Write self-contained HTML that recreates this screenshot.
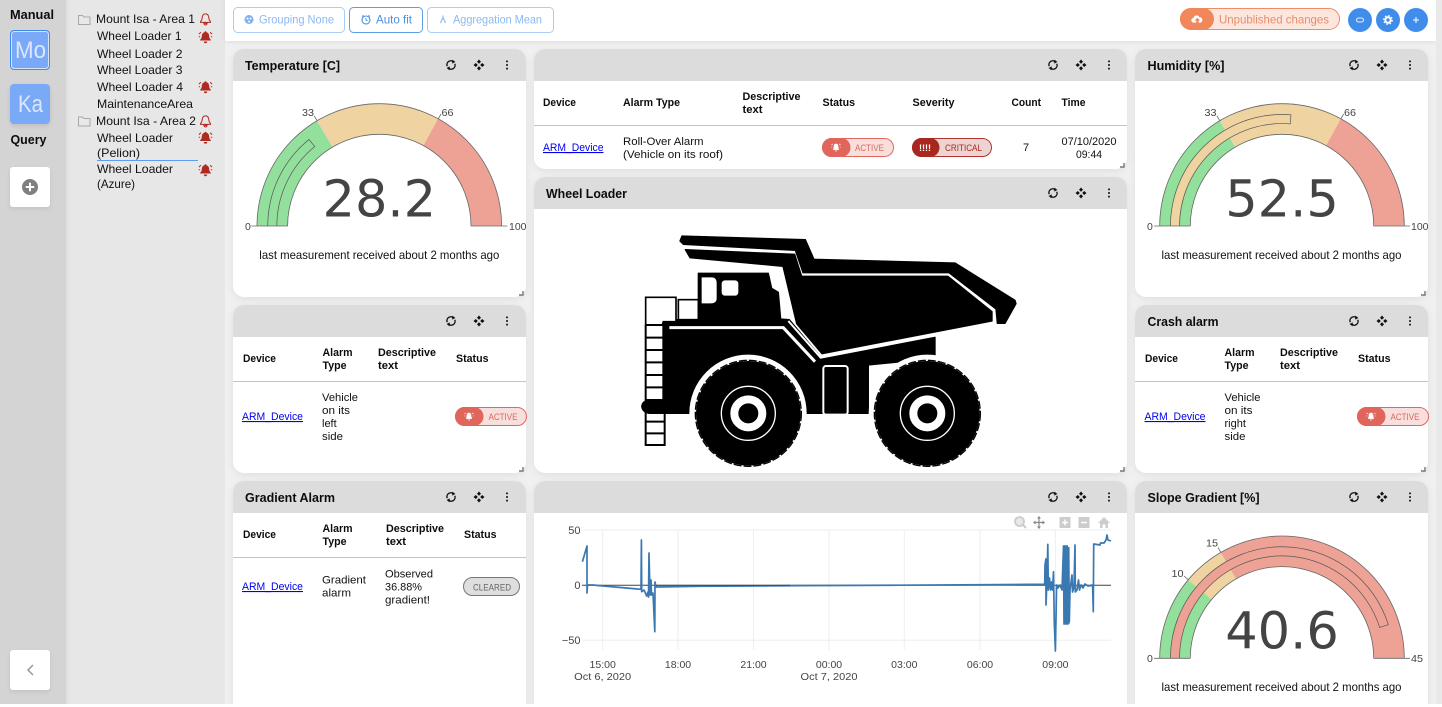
<!DOCTYPE html>
<html><head><meta charset="utf-8"><style>
html,body{margin:0;padding:0;width:1442px;height:707px;overflow:hidden;background:#fff}
#w{position:absolute;left:0;top:0;width:1442px;height:704px;overflow:hidden;background:#f0f0f0}
.d{position:absolute}
.card{position:absolute;background:#fff;border-radius:11px;overflow:hidden;box-shadow:0 2px 8px rgba(0,0,0,.07)}
.card i{display:block;height:32px;background:#dcdcdc}
svg{position:absolute;left:0;top:0}
text{font-family:"Liberation Sans",sans-serif;fill:#111;font-size:11px}
.b{font-weight:bold;fill:#0c0c0c}
.t{font-weight:bold;font-size:13px;fill:#0c0c0c}
.s{font-size:12px;fill:#111}
.l{fill:#00e;text-decoration:underline;font-size:11px}
.g{font-size:10.5px;fill:#444}
.v{font-family:"DejaVu Sans",sans-serif;font-size:51px;fill:#444}
.p{font-size:9px}
</style></head><body><div id="w">
<div class="d" style="left:0;top:0;width:66px;height:704px;background:#d4d4d4"></div>
<div class="d" style="left:66px;top:0;width:159px;height:704px;background:#e7e7e7;box-shadow:inset 4px 0 4px -3px rgba(0,0,0,.05)"></div>
<div class="d" style="left:225px;top:0;width:1211px;height:41px;background:#fff;box-shadow:0 1px 5px rgba(0,0,0,.08)"></div>
<div class="d" style="left:1436px;top:0;width:6px;height:704px;background:#e9e9e9"></div>
<div class="d" style="left:10px;top:30px;width:38px;height:38px;background:#7aa9f8;border:1px solid #3d8bea;border-radius:4px"></div>
<div class="d" style="left:10px;top:84px;width:40px;height:40px;background:#7aa9f8;border-radius:4px;box-shadow:0 2px 5px rgba(0,0,0,.1)"></div>
<div class="d" style="left:10px;top:167px;width:40px;height:40px;background:#fff;border-radius:3px;box-shadow:0 2px 5px rgba(0,0,0,.08)"></div>
<div class="d" style="left:10px;top:650px;width:40px;height:40px;background:#fff;border-radius:3px;box-shadow:0 2px 5px rgba(0,0,0,.08)"></div>

<div class="card" style="left:233px;top:49px;width:293px;height:248px"><i></i></div>
<div class="card" style="left:233px;top:305px;width:293px;height:168px"><i></i></div>
<div class="card" style="left:233px;top:481px;width:293px;height:240px"><i></i></div>
<div class="card" style="left:534px;top:49px;width:593px;height:120px"><i></i></div>
<div class="card" style="left:534px;top:177px;width:593px;height:296px"><i></i></div>
<div class="card" style="left:534px;top:481px;width:593px;height:240px"><i></i></div>
<div class="card" style="left:1135px;top:49px;width:293px;height:248px"><i></i></div>
<div class="card" style="left:1135px;top:305px;width:293px;height:168px"><i></i></div>
<div class="card" style="left:1135px;top:481px;width:293px;height:240px"><i></i></div>

<svg width="1442" height="704" viewBox="0 0 1442 704" xmlns="http://www.w3.org/2000/svg">
<defs>
<g id="ic">
<path d="M-3.8 1.2A3.9 3.9 0 0 1 2.6 -3M3.8 -1.2A3.9 3.9 0 0 1 -2.6 3" fill="none" stroke="#111" stroke-width="1.4"/>
<path d="M1.4 -5.4L4.4 -3L1.2 -1.4ZM-1.4 5.4L-4.4 3L-1.2 1.4Z" fill="#111"/>
<g fill="#111" transform="translate(28,0)"><path d="M0 -5.5L2 -3.2L0 -1.2L-2 -3.2ZM0 5.5L2 3.2L0 1.2L-2 3.2ZM-5.5 0L-3.2 -2L-1.2 0L-3.2 2ZM5.5 0L3.2 -2L1.2 0L3.2 2Z"/></g>
<g fill="#111" transform="translate(56,0)"><circle cy="-3.6" r="1"/><circle r="1"/><circle cy="3.6" r="1"/></g>
</g>
<path id="rs" d="M-4 0H0V-4" fill="none" stroke="#777" stroke-width="1.4"/>
<g id="bell"><path d="M0 -6.2a1 1 0 0 1 1 1c2.2.6 2.6 2.4 2.7 4.2.1 1.5.7 2.3 1.6 3.1v.9H-5.3v-.9c.9-.8 1.5-1.6 1.6-3.1.1-1.8.5-3.6 2.7-4.2a1 1 0 0 1 1-1zM-1.7 4h3.4a1.7 1.7 0 0 1-3.4 0z" fill="#b02a20"/><path d="M-4.6 -5.2L-6.6 -3.4M4.6 -5.2L6.6 -3.4M-6.7 -.8H-5.4M6.7 -.8H5.4" stroke="#b02a20" stroke-width="1" fill="none"/></g>
<g id="bo"><path d="M0 -5.6c2.8 0 3.3 2.2 3.4 4.4.1 1.6.7 2.4 1.6 3.2v.9H-5v-.9c.9-.8 1.5-1.6 1.6-3.2.1-2.2.6-4.4 3.4-4.4zM-1.6 3.9h3.2a1.6 1.6 0 0 1-3.2 0z" fill="none" stroke="#b02a20" stroke-width="1"/></g>
<path id="fo" d="M.5 1.5H4.5L6 3H12V10.5H.5Z" fill="#e8e8e8" stroke="#a8a8a8" stroke-width="1"/>
<g id="wb"><path d="M0 -3.8c1.6 0 2.2 1 2.3 2.6l.2 2L3.2 2.4H-3.2L-2.5.8l.2-2C-2.2 -2.8 -1.6 -3.8 0 -3.8zM-1 3h2a1 1 0 0 1-2 0z" fill="#fff"/><path d="M-3.3 -3.6L-4.4 -2.6M3.3 -3.6L4.4 -2.6M-4.7 -.5H-3.8M4.7 -.5H3.8" stroke="#fff" stroke-width=".8"/></g>
<g id="pa"><rect x=".5" y=".5" width="71" height="18" rx="9" fill="#f9dfdc" stroke="#e2685d"/><path d="M9.5 0H19a9.5 9.5 0 0 1 0 19H9.5a9.5 9.5 0 0 1 0-19z" fill="#e0655a"/><use href="#wb" x="14" y="9.5"/></g>
</defs>

<!-- rail -->
<text x="10" y="19" class="b" style="font-size:12.5px" textLength="44" lengthAdjust="spacingAndGlyphs">Manual</text>
<rect x="11.5" y="31.5" width="37" height="37" rx="3" fill="none" stroke="#d7e5fb" stroke-width="1"/>
<text x="15" y="58" style="font-size:24px;fill:#dce7fe" textLength="31" lengthAdjust="spacingAndGlyphs">Mo</text>
<text x="18" y="112" style="font-size:24px;fill:#dce7fe" textLength="25" lengthAdjust="spacingAndGlyphs">Ka</text>
<text x="10.5" y="144" class="b" style="font-size:12.5px" textLength="36" lengthAdjust="spacingAndGlyphs">Query</text>
<circle cx="30" cy="187" r="8" fill="#808080"/><path d="M25.8 187H34.2M30 182.8V191.2" stroke="#fff" stroke-width="2"/>
<path d="M33 665L28 670L33 675" fill="none" stroke="#999" stroke-width="1.5"/>

<!-- tree -->
<use href="#fo" x="78" y="14"/><use href="#fo" x="78" y="115.5"/>
<g>
<text x="96" y="23" class="s" textLength="99" lengthAdjust="spacingAndGlyphs">Mount Isa - Area 1</text>
<text x="97" y="40" class="s" textLength="84.5" lengthAdjust="spacingAndGlyphs">Wheel Loader 1</text>
<text x="97" y="58" class="s" textLength="85.5" lengthAdjust="spacingAndGlyphs">Wheel Loader 2</text>
<text x="97" y="74" class="s" textLength="85.5" lengthAdjust="spacingAndGlyphs">Wheel Loader 3</text>
<text x="97" y="91" class="s" textLength="86" lengthAdjust="spacingAndGlyphs">Wheel Loader 4</text>
<text x="97" y="108" class="s" textLength="96" lengthAdjust="spacingAndGlyphs">MaintenanceArea</text>
<text x="96" y="125" class="s" textLength="100" lengthAdjust="spacingAndGlyphs">Mount Isa - Area 2</text>
<text x="97" y="142" class="s" textLength="76" lengthAdjust="spacingAndGlyphs">Wheel Loader</text>
<text x="97" y="157" class="s" textLength="43" lengthAdjust="spacingAndGlyphs">(Pelion)</text>
<text x="97" y="173" class="s" textLength="76" lengthAdjust="spacingAndGlyphs">Wheel Loader</text>
<text x="97" y="188" class="s" textLength="38" lengthAdjust="spacingAndGlyphs">(Azure)</text>
</g>
<rect x="97" y="160" width="101" height="1" fill="#5b9df0"/>
<use href="#bo" x="205.5" y="19.5"/><use href="#bo" x="205.5" y="121.5"/>
<use href="#bell" x="205.5" y="37.5"/><use href="#bell" x="205.5" y="87.5"/><use href="#bell" x="205.5" y="138"/><use href="#bell" x="205.5" y="170.5"/>

<!-- toolbar -->
<rect x="233.5" y="7.5" width="111" height="25" rx="4" fill="#fff" stroke="#a9cdf7"/>
<rect x="349.5" y="7.5" width="73" height="25" rx="4" fill="#fff" stroke="#5a9ee8"/>
<rect x="427.5" y="7.5" width="126" height="25" rx="4" fill="#fff" stroke="#a9cdf7"/>
<circle cx="249" cy="19.5" r="4.5" fill="#7fb0f0"/><circle cx="247.5" cy="18.5" r="1" fill="#fff"/><circle cx="250.5" cy="18.5" r="1" fill="#fff"/><circle cx="249" cy="21.5" r="1" fill="#fff"/>
<circle cx="366" cy="20" r="4" fill="none" stroke="#4a90e2" stroke-width="1.1"/><path d="M366 18V20L367.5 21M362 16.5L363.5 15.3M370 16.5L368.5 15.3" fill="none" stroke="#4a90e2" stroke-width="1"/>
<path d="M443 15.5v2M443 17.5L440.5 23M443 17.5L445.5 23" fill="none" stroke="#8ab8f2" stroke-width="1.1"/>
<text x="259" y="23.5" textLength="75" lengthAdjust="spacingAndGlyphs" style="font-size:12px;fill:#8ab9f4">Grouping None</text>
<text x="376" y="23.5" textLength="36" lengthAdjust="spacingAndGlyphs" style="font-size:12px;fill:#4a90e2">Auto fit</text>
<text x="453" y="23.5" textLength="89" lengthAdjust="spacingAndGlyphs" style="font-size:12px;fill:#8ab9f4">Aggregation Mean</text>
<rect x="1180.5" y="8.5" width="159" height="21" rx="10.5" fill="#fde6de" stroke="#f28c62"/>
<path d="M1191 8H1203a11 11 0 0 1 0 22H1191a11 11 0 0 1 0-22z" fill="#f2875b"/>
<g transform="translate(1197,19.5) scale(.78) translate(-1196.5,-18.5)"><path d="M1192.5 22.5a3 3 0 0 1-.5-6 4 4 0 0 1 7.6-.8 3.4 3.4 0 0 1 .9 6.8h-2v-2.5h2l-3.5-3.8-3.5 3.8h2v2.5z" fill="#fff"/></g>
<text x="1219" y="23.5" textLength="110" lengthAdjust="spacingAndGlyphs" style="font-size:12px;fill:#e78d6c">Unpublished changes</text>
<circle cx="1360" cy="20" r="12" fill="#3f8ceb"/><circle cx="1388" cy="20" r="12" fill="#3f8ceb"/><circle cx="1416" cy="20" r="12" fill="#3f8ceb"/>
<rect x="1356.5" y="18" width="7" height="4" rx="2" fill="none" stroke="#fff" stroke-width="1.1" opacity=".85"/>
<circle cx="1388" cy="20" r="2.7" fill="none" stroke="#fff" stroke-width="2"/><circle cx="1388" cy="20" r="4.3" fill="none" stroke="#fff" stroke-width="1.2" stroke-dasharray="1.7 1.68"/>
<path d="M1413 20H1419M1416 17V23" stroke="#dfeafc" stroke-width="1.3"/>

<!-- card titles and icons -->
<text x="245" y="70" class="t" textLength="95" lengthAdjust="spacingAndGlyphs">Temperature [C]</text>
<text x="546" y="198" class="t" textLength="81" lengthAdjust="spacingAndGlyphs">Wheel Loader</text>
<text x="1147.5" y="70" class="t" textLength="77" lengthAdjust="spacingAndGlyphs">Humidity [%]</text>
<text x="1147.5" y="326" class="t" textLength="71" lengthAdjust="spacingAndGlyphs">Crash alarm</text>
<text x="245" y="502" class="t" textLength="90" lengthAdjust="spacingAndGlyphs">Gradient Alarm</text>
<text x="1147.5" y="502" class="t" textLength="112" lengthAdjust="spacingAndGlyphs">Slope Gradient [%]</text>
<use href="#ic" x="451" y="65"/><use href="#ic" x="451" y="321"/><use href="#ic" x="451" y="497"/>
<use href="#ic" x="1053" y="65"/><use href="#ic" x="1053" y="193"/><use href="#ic" x="1053" y="497"/>
<use href="#ic" x="1354" y="65"/><use href="#ic" x="1354" y="321"/><use href="#ic" x="1354" y="497"/>
<use href="#rs" x="523" y="295"/><use href="#rs" x="523" y="471"/><use href="#rs" x="1124" y="167"/><use href="#rs" x="1124" y="471"/><use href="#rs" x="1425" y="295"/><use href="#rs" x="1425" y="471"/>

<!-- Temperature gauge -->
<g transform="translate(379.3,226)" fill="none">
<g stroke-width="30.6">
<path d="M-107 0A107 107 0 0 1 107 0" pathLength="100" stroke="#93e09c" stroke-dasharray="33 100"/>
<path d="M-107 0A107 107 0 0 1 107 0" pathLength="100" stroke="#efd3a0" stroke-dasharray="33 100" stroke-dashoffset="-33"/>
<path d="M-107 0A107 107 0 0 1 107 0" pathLength="100" stroke="#eea295" stroke-dasharray="34 100" stroke-dashoffset="-66"/>
</g>
<path d="M-107 0A107 107 0 0 1 107 0" pathLength="100" stroke="#555" stroke-width="9.8" stroke-dasharray="28.4 100"/>
<path d="M-107 0A107 107 0 0 1 107 0" pathLength="100" stroke="#93e09c" stroke-width="8.4" stroke-dasharray="28.2 100"/>
<path d="M-122.3 0A122.3 122.3 0 0 1 122.3 0M-91.7 0A91.7 91.7 0 0 1 91.7 0M-128 0H-91.7M91.7 0H128M-62.2 -105.3L-65.2 -110.2M58.9 -107.1L61.7 -112.1" stroke="#666" stroke-width=".8"/>
</g>
<text x="245" y="230" class="g">0</text><text x="509" y="230" class="g" textLength="17.5" lengthAdjust="spacingAndGlyphs">100</text>
<text x="302" y="116" class="g" textLength="12" lengthAdjust="spacingAndGlyphs">33</text><text x="441.5" y="116" class="g" textLength="12" lengthAdjust="spacingAndGlyphs">66</text>
<text x="379.3" y="216.5" class="v" text-anchor="middle">28.2</text>
<text x="259.3" y="259" class="s" textLength="240" lengthAdjust="spacingAndGlyphs">last measurement received about 2 months ago</text>

<!-- Humidity gauge -->
<g transform="translate(1282,226)" fill="none">
<g stroke-width="30.6">
<path d="M-107 0A107 107 0 0 1 107 0" pathLength="100" stroke="#93e09c" stroke-dasharray="33 100"/>
<path d="M-107 0A107 107 0 0 1 107 0" pathLength="100" stroke="#efd3a0" stroke-dasharray="33 100" stroke-dashoffset="-33"/>
<path d="M-107 0A107 107 0 0 1 107 0" pathLength="100" stroke="#eea295" stroke-dasharray="34 100" stroke-dashoffset="-66"/>
</g>
<path d="M-107 0A107 107 0 0 1 107 0" pathLength="100" stroke="#555" stroke-width="9.8" stroke-dasharray="52.7 100"/>
<path d="M-107 0A107 107 0 0 1 107 0" pathLength="100" stroke="#efd3a0" stroke-width="8.4" stroke-dasharray="52.5 100"/>
<path d="M-122.3 0A122.3 122.3 0 0 1 122.3 0M-91.7 0A91.7 91.7 0 0 1 91.7 0M-128 0H-91.7M91.7 0H128M-62.2 -105.3L-65.2 -110.2M58.9 -107.1L61.7 -112.1" stroke="#666" stroke-width=".8"/>
</g>
<text x="1147" y="230" class="g">0</text><text x="1411" y="230" class="g" textLength="17.5" lengthAdjust="spacingAndGlyphs">100</text>
<text x="1204.5" y="116" class="g" textLength="12" lengthAdjust="spacingAndGlyphs">33</text><text x="1344" y="116" class="g" textLength="12" lengthAdjust="spacingAndGlyphs">66</text>
<text x="1282" y="216.5" class="v" text-anchor="middle">52.5</text>
<text x="1161.5" y="259" class="s" textLength="240" lengthAdjust="spacingAndGlyphs">last measurement received about 2 months ago</text>

<!-- Slope gauge -->
<g transform="translate(1282,658.3)" fill="none">
<g stroke-width="30.6">
<path d="M-107 0A107 107 0 0 1 107 0" pathLength="100" stroke="#93e09c" stroke-dasharray="22.2 100"/>
<path d="M-107 0A107 107 0 0 1 107 0" pathLength="100" stroke="#efd3a0" stroke-dasharray="11.1 100" stroke-dashoffset="-22.2"/>
<path d="M-107 0A107 107 0 0 1 107 0" pathLength="100" stroke="#eea295" stroke-dasharray="66.7 100" stroke-dashoffset="-33.3"/>
</g>
<path d="M-107 0A107 107 0 0 1 107 0" pathLength="100" stroke="#555" stroke-width="9.8" stroke-dasharray="90.4 100"/>
<path d="M-107 0A107 107 0 0 1 107 0" pathLength="100" stroke="#eea295" stroke-width="8.4" stroke-dasharray="90.2 100"/>
<path d="M-122.3 0A122.3 122.3 0 0 1 122.3 0M-91.7 0A91.7 91.7 0 0 1 91.7 0M-128 0H-91.7M91.7 0H128M-93.7 -78.6L-98 -82.3M-61.2 -106L-64 -110.9" stroke="#666" stroke-width=".8"/>
</g>
<text x="1147" y="662" class="g">0</text><text x="1411" y="662" class="g" textLength="12" lengthAdjust="spacingAndGlyphs">45</text>
<text x="1206" y="546.5" class="g" textLength="12" lengthAdjust="spacingAndGlyphs">15</text><text x="1171.5" y="577" class="g" textLength="12" lengthAdjust="spacingAndGlyphs">10</text>
<text x="1282" y="648.3" class="v" text-anchor="middle">40.6</text>
<text x="1161.5" y="691" class="s" textLength="240" lengthAdjust="spacingAndGlyphs">last measurement received about 2 months ago</text>

<!-- Top alarm table -->
<text x="543" y="106" class="b" textLength="33" lengthAdjust="spacingAndGlyphs">Device</text>
<text x="623" y="106" class="b" textLength="57" lengthAdjust="spacingAndGlyphs">Alarm Type</text>
<text x="742.5" y="100" class="b" textLength="58" lengthAdjust="spacingAndGlyphs">Descriptive</text>
<text x="742.5" y="113" class="b" textLength="20" lengthAdjust="spacingAndGlyphs">text</text>
<text x="822.5" y="106" class="b" textLength="32.5" lengthAdjust="spacingAndGlyphs">Status</text>
<text x="912.5" y="106" class="b" textLength="42" lengthAdjust="spacingAndGlyphs">Severity</text>
<text x="1011.5" y="106" class="b" textLength="29.5" lengthAdjust="spacingAndGlyphs">Count</text>
<text x="1061.5" y="106" class="b" textLength="24" lengthAdjust="spacingAndGlyphs">Time</text>
<rect x="534" y="125" width="593" height="1" fill="#c4c4c4"/>
<text x="543" y="151" class="l" textLength="60.5" lengthAdjust="spacingAndGlyphs">ARM_Device</text>
<text x="623" y="145" textLength="80.5" lengthAdjust="spacingAndGlyphs">Roll-Over Alarm</text>
<text x="623" y="158" textLength="100" lengthAdjust="spacingAndGlyphs">(Vehicle on its roof)</text>
<use href="#pa" x="822" y="138"/>
<text x="855" y="151" class="p" textLength="29" lengthAdjust="spacingAndGlyphs" style="fill:#d9685e">ACTIVE</text>
<rect x="912.5" y="138.5" width="79" height="18" rx="9" fill="#edd3d1" stroke="#b4362e"/>
<path d="M921.5 138H930a9.5 9.5 0 0 1 0 19H921.5a9.5 9.5 0 0 1 0-19z" fill="#a8281f"/>
<text x="925" y="151" text-anchor="middle" class="p" style="fill:#fff;font-weight:bold">!!!!</text>
<text x="945" y="151" class="p" textLength="37" lengthAdjust="spacingAndGlyphs" style="fill:#a8281f">CRITICAL</text>
<text x="1026" y="151" text-anchor="middle">7</text>
<text x="1061.5" y="145" textLength="55" lengthAdjust="spacingAndGlyphs">07/10/2020</text>
<text x="1076" y="158" textLength="26" lengthAdjust="spacingAndGlyphs">09:44</text>

<!-- Left alarm table -->
<text x="243" y="362" class="b" textLength="33" lengthAdjust="spacingAndGlyphs">Device</text>
<text x="322.5" y="356" class="b" textLength="30" lengthAdjust="spacingAndGlyphs">Alarm</text>
<text x="322.5" y="369" class="b" textLength="24" lengthAdjust="spacingAndGlyphs">Type</text>
<text x="378" y="356" class="b" textLength="58" lengthAdjust="spacingAndGlyphs">Descriptive</text>
<text x="378" y="369" class="b" textLength="20" lengthAdjust="spacingAndGlyphs">text</text>
<text x="456" y="362" class="b" textLength="32.5" lengthAdjust="spacingAndGlyphs">Status</text>
<rect x="233" y="381" width="293" height="1" fill="#c4c4c4"/>
<text x="242" y="420" class="l" textLength="61" lengthAdjust="spacingAndGlyphs">ARM_Device</text>
<text x="322" y="401" textLength="36" lengthAdjust="spacingAndGlyphs">Vehicle</text>
<text x="322" y="414" textLength="28" lengthAdjust="spacingAndGlyphs">on its</text>
<text x="322" y="427">left</text>
<text x="322" y="440" textLength="21" lengthAdjust="spacingAndGlyphs">side</text>
<use href="#pa" x="455" y="407"/>
<text x="488.5" y="420" class="p" textLength="29" lengthAdjust="spacingAndGlyphs" style="fill:#d9685e">ACTIVE</text>

<!-- Crash table -->
<text x="1145" y="362" class="b" textLength="33" lengthAdjust="spacingAndGlyphs">Device</text>
<text x="1224.5" y="356" class="b" textLength="30" lengthAdjust="spacingAndGlyphs">Alarm</text>
<text x="1224.5" y="369" class="b" textLength="24" lengthAdjust="spacingAndGlyphs">Type</text>
<text x="1280" y="356" class="b" textLength="58" lengthAdjust="spacingAndGlyphs">Descriptive</text>
<text x="1280" y="369" class="b" textLength="20" lengthAdjust="spacingAndGlyphs">text</text>
<text x="1358" y="362" class="b" textLength="32.5" lengthAdjust="spacingAndGlyphs">Status</text>
<rect x="1135" y="381" width="293" height="1" fill="#c4c4c4"/>
<text x="1144.5" y="420" class="l" textLength="61" lengthAdjust="spacingAndGlyphs">ARM_Device</text>
<text x="1224.5" y="401" textLength="36" lengthAdjust="spacingAndGlyphs">Vehicle</text>
<text x="1224.5" y="414" textLength="28" lengthAdjust="spacingAndGlyphs">on its</text>
<text x="1224.5" y="427">right</text>
<text x="1224.5" y="440" textLength="21" lengthAdjust="spacingAndGlyphs">side</text>
<use href="#pa" x="1357" y="407"/>
<text x="1390.5" y="420" class="p" textLength="29" lengthAdjust="spacingAndGlyphs" style="fill:#d9685e">ACTIVE</text>

<!-- Gradient table -->
<text x="243" y="538" class="b" textLength="33" lengthAdjust="spacingAndGlyphs">Device</text>
<text x="322.5" y="532" class="b" textLength="30" lengthAdjust="spacingAndGlyphs">Alarm</text>
<text x="322.5" y="545" class="b" textLength="24" lengthAdjust="spacingAndGlyphs">Type</text>
<text x="386" y="532" class="b" textLength="58" lengthAdjust="spacingAndGlyphs">Descriptive</text>
<text x="386" y="545" class="b" textLength="20" lengthAdjust="spacingAndGlyphs">text</text>
<text x="464" y="538" class="b" textLength="32.5" lengthAdjust="spacingAndGlyphs">Status</text>
<rect x="233" y="557" width="293" height="1" fill="#c4c4c4"/>
<text x="242" y="590" class="l" textLength="61" lengthAdjust="spacingAndGlyphs">ARM_Device</text>
<text x="322" y="583.5" textLength="44" lengthAdjust="spacingAndGlyphs">Gradient</text>
<text x="322" y="596.5" textLength="29" lengthAdjust="spacingAndGlyphs">alarm</text>
<text x="385" y="577.5" textLength="48" lengthAdjust="spacingAndGlyphs">Observed</text>
<text x="385" y="590.5" textLength="37" lengthAdjust="spacingAndGlyphs">36.88%</text>
<text x="385" y="603.5" textLength="45" lengthAdjust="spacingAndGlyphs">gradient!</text>
<rect x="463.5" y="577.5" width="56" height="18" rx="9" fill="#dedede" stroke="#777"/>
<text x="473" y="590.5" class="p" textLength="38" lengthAdjust="spacingAndGlyphs" style="fill:#666">CLEARED</text>

<!-- Truck -->
<g transform="translate(620,225) scale(.33333)">
<g fill="#000" stroke="#000" stroke-width="4" stroke-linejoin="round">
<path d="M186 33L556 44L582 103L1005 114L1185 226L1188 236L1155 295L1132 295L1128 252L987 143L549 143L526 76L190 58L180 48Z"/>
<path d="M196 74L524 88L545 154L984 154L1116 260L1116 288L606 386L530 296L489 124L210 98Z"/>
<path d="M235 145H445L455 190L475 202L482 282L508 284L603 398L945 337V400L745 420V565H205H90C65 565 55 535 80 527H130V292L140 284H235Z"/>
</g>
<path d="M77 217H168V290H130L127 300H77Z" fill="#fff" stroke="#000" stroke-width="5"/>
<rect x="175" y="224" width="60" height="60" fill="#fff" stroke="#000" stroke-width="5"/>
<path d="M77 300V660H134V565M77 300H130V527M77 338H130M77 375H130M77 412H130M77 450H130M77 487H130M77 525H130M77 590H134M77 625H134" fill="none" stroke="#000" stroke-width="6"/>
<path d="M245 157H275Q290 157 290 175V220Q290 235 272 235H245Z" fill="#fff"/>
<rect x="305" y="166" width="50" height="46" rx="10" fill="#fff"/>
<path d="M148 308H490L585 410" fill="none" stroke="#fff" stroke-width="9"/>
<path d="M505 288L602 398L945 332" fill="none" stroke="#fff" stroke-width="6"/>
<rect x="610" y="423" width="73" height="146" rx="8" fill="#000" stroke="#fff" stroke-width="6"/>
<path d="M208 567V565A176 176 0 0 1 560 565V567H208Z" fill="#fff"/>
<path d="M746 567V565A176 176 0 0 1 1098 565V567H746Z" fill="#fff"/>
<g>
<circle cx="385" cy="565" r="157" fill="#000"/>
<circle cx="385" cy="565" r="159" fill="none" stroke="#000" stroke-width="4" stroke-dasharray="24 6"/>
<circle cx="385" cy="565" r="81" fill="none" stroke="#fff" stroke-width="4"/>
<circle cx="385" cy="565" r="42" fill="none" stroke="#fff" stroke-width="24"/>
</g>
<g transform="translate(537,0)">
<circle cx="385" cy="565" r="157" fill="#000"/>
<circle cx="385" cy="565" r="159" fill="none" stroke="#000" stroke-width="4" stroke-dasharray="24 6"/>
<circle cx="385" cy="565" r="81" fill="none" stroke="#fff" stroke-width="4"/>
<circle cx="385" cy="565" r="42" fill="none" stroke="#fff" stroke-width="24"/>
</g>
</g>

<!-- Chart -->
<path d="M582 530H1111M582 640.3H1111M602.7 530V650M678 530V650M753.5 530V650M829 530V650M904.3 530V650M980 530V650M1055.4 530V650" stroke="#eeeeee" stroke-width="1" fill="none"/>
<path d="M582 585.3H1111" stroke="#444" stroke-width="1"/>
<path d="M582.4 561.7L587 546L587 593L587.5 585L593 585L598 585.5L641 589.3L641.4 540L641.7 591.7L644 590L646.7 596L648 592L648.5 597L649 553L650 595L651 580L651.5 595L653 593L654.8 631.7L655 582L656 587L700 586.3L800 585.6L900 585.2L1000 584.6L1044.7 584.2L1045 565L1045.9 559L1046 605L1047 580L1047.8 544.3L1048.3 590L1049.5 578L1050.5 590L1051.5 582L1052.5 590L1053.5 571.7L1054.3 623L1055.4 651L1056.6 585L1058 588L1060 585L1062 590L1063.5 546L1064 624L1064.7 546L1065.3 624L1066 546L1066.7 624L1067.3 546L1068 624L1068.7 548L1069.3 622L1070 590L1072 575L1072.5 592L1074 587L1075 545L1075.3 592L1077 590L1078.5 580L1079.5 590L1081 585L1083 588L1085 584L1088 586L1092.6 585L1093.3 611.7L1093.7 544L1097 544.5L1100 545L1100.5 543L1104 543L1106 540L1107 535L1108 540L1111 541" fill="none" stroke="#3a78b2" stroke-width="1.7" stroke-linejoin="round"/>
<rect x="1063.5" y="547" width="6" height="77" fill="#3a78b2"/>
<path d="M656 585.3H790" stroke="#444" stroke-width=".8"/>
<text x="580.5" y="534" text-anchor="end" class="g" style="font-size:11px">50</text>
<text x="580.5" y="589" text-anchor="end" class="g" style="font-size:11px">0</text>
<text x="580.5" y="644" text-anchor="end" class="g" style="font-size:11px">−50</text>
<text x="602.7" y="668" text-anchor="middle" class="g">15:00</text>
<text x="678" y="668" text-anchor="middle" class="g">18:00</text>
<text x="753.5" y="668" text-anchor="middle" class="g">21:00</text>
<text x="829" y="668" text-anchor="middle" class="g">00:00</text>
<text x="904.3" y="668" text-anchor="middle" class="g">03:00</text>
<text x="980" y="668" text-anchor="middle" class="g">06:00</text>
<text x="1055.4" y="668" text-anchor="middle" class="g">09:00</text>
<text x="602.7" y="680" text-anchor="middle" class="g" textLength="57" lengthAdjust="spacingAndGlyphs">Oct 6, 2020</text>
<text x="829" y="680" text-anchor="middle" class="g" textLength="57" lengthAdjust="spacingAndGlyphs">Oct 7, 2020</text>
<circle cx="1019.5" cy="521.5" r="4.5" fill="#e8e8e8" stroke="#ccc" stroke-width="1.8"/><path d="M1023 525L1026 528" stroke="#ccc" stroke-width="2"/>
<path d="M1039 517V528M1033.5 522.5H1044.5" stroke="#888" stroke-width="1.2"/><path d="M1039 516L1041 518.5H1037ZM1039 529L1041 526.5H1037ZM1033 522.5L1035.5 520.5V524.5ZM1045 522.5L1042.5 520.5V524.5Z" fill="#888"/>
<rect x="1059.5" y="517" width="11" height="11" fill="#ccc"/><path d="M1062 522.5H1068M1065 519.5V525.5" stroke="#fff" stroke-width="1.5"/>
<rect x="1078.5" y="517" width="11" height="11" fill="#ccc"/><path d="M1081 522.5H1087" stroke="#fff" stroke-width="1.5"/>
<path d="M1104 517L1110 523H1108V528H1105.5V524.5H1102.5V528H1100V523H1098Z" fill="#ccc"/>
</svg>
</div></body></html>
